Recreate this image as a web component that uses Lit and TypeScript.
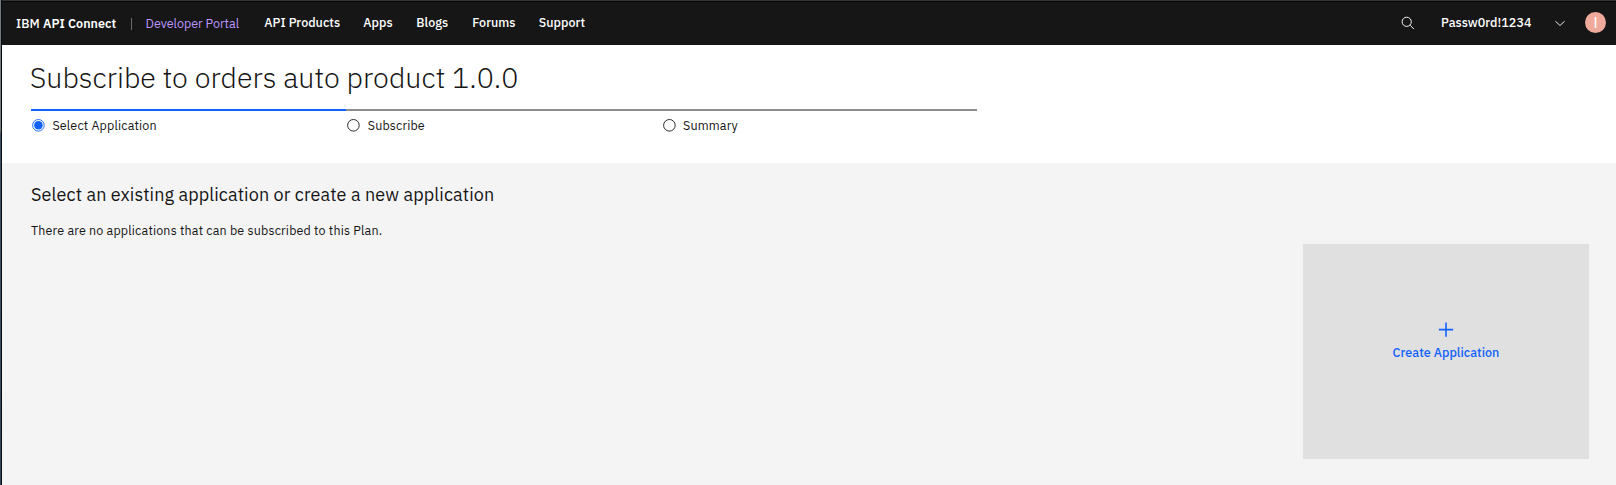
import { LitElement, html, svg, css, nothing } from "lit";
import { customElement } from "lit/decorators.js";

const STEPS = [
  { label: "Select Application", current: true },
  { label: "Subscribe", current: false },
  { label: "Summary", current: false },
];

@customElement("portal-header")
export class PortalHeader extends LitElement {
  static styles = css`
    :host { display: flex; box-sizing: border-box; height: 45px; padding: 14px 10px 0 14px;
      background: #161616; color: #fff; border-top: 1px solid #333635; box-shadow: inset 0 1px #080808;
      font-size: 12.5px; line-height: 16px; white-space: nowrap; }
    .brand { display: flex; width: 248.3px; flex: none; }
    .ibm { font-weight: 500; width: 27px; }
    .product { font-weight: 600; width: 87.5px; letter-spacing: 0.08px; }
    .divider { width: 1px; height: 12px; margin-top: 3px; background: #6f6f6f; }
    .portal { margin-left: 14px; color: #be95ff; }
    nav { display: flex; margin-top: -1px; font-weight: 500; letter-spacing: 0.03px; }
    .api { width: 99px; }
    .apps { width: 53px; }
    .blogs { width: 56px; }
    .forums { width: 66.5px; }
    .tools { display: flex; margin-left: auto; margin-top: -1px; font-weight: 500; }
    .search { width: 14px; height: 14px; margin: 2px 26px 0 0; }
    .user { width: 90px; letter-spacing: 0.03px; }
    .chevron { width: 16px; height: 16px; margin: 1px 17px 0 21px; }
    .avatar { width: 21px; height: 21px; margin-top: -2px; border-radius: 50%; background: #efaa9c;
      display: flex; align-items: center; justify-content: center;
      font-family: Roboto, sans-serif; font-size: 15px; font-weight: 400; }
  `;
  render() {
    return html`
      <div class="brand">
        <span class="ibm">IBM</span><span class="product">API Connect</span>
        <span class="divider"></span><span class="portal">Developer Portal</span>
      </div>
      <nav>
        <span class="api">API Products</span><span class="apps">Apps</span><span class="blogs">Blogs</span>
        <span class="forums">Forums</span><span>Support</span>
      </nav>
      <div class="tools">
        <svg class="search" viewBox="0 0 14 14" fill="none" stroke="#f4f4f4"><circle cx="5.7" cy="5.8" r="4.6"/><path d="M9.1 9.2 13 13.1"/></svg>
        <span class="user">Passw0rd!1234</span>
        <svg class="chevron" viewBox="0 0 16 16" fill="none" stroke="#f4f4f4"><path d="M3.6 6.2 8 10.6l4.4-4.4"/></svg>
        <span class="avatar">I</span>
      </div>`;
  }
}

@customElement("step-progress")
export class StepProgress extends LitElement {
  static styles = css`
    :host { display: flex; width: 946px; font-size: 12.5px; line-height: 16px; letter-spacing: 0.15px; }
    .step { flex: 1; display: flex; border-top: 2px solid #8d8d8d; padding: 6px 0 0 1px; }
    .step.current { border-top-color: #0f62fe; }
    svg { width: 13px; height: 13px; margin: 2px 7.4px 0 0; }
  `;
  render() {
    return STEPS.map(
      (s) => html`<div class="step ${s.current ? "current" : ""}">
        <svg viewBox="0 0 13 13" fill="none" stroke=${s.current ? "#0f62fe" : "#161616"}>
          <circle cx="6.4" cy="6.3" r="5.8" stroke-width="0.9"/>
          ${s.current ? svg`<circle cx="6.4" cy="6.3" r="4.3" fill="#0f62fe" stroke="none"/>` : nothing}
        </svg>
        <span>${s.label}</span>
      </div>`
    );
  }
}

@customElement("app-root")
export class AppRoot extends LitElement {
  static styles = css`
    :host { display: flex; width: 1616px; height: 485px; box-sizing: border-box; overflow: hidden;
      font-family: "IBM Plex Sans", Roboto, sans-serif; color: #161616; background: #f4f4f4; }
    .edge { width: 1px; flex: none; background: linear-gradient(#777b7a 0 130px, #3d5060 135px 300px, #34475a); border-right: 1px solid #050b10; }
    .page { flex: 1; }
    .top { height: 118px; box-sizing: border-box; padding: 14px 29px 0; background: #fff; }
    h1 { margin: 0 0 13px -1px; font-size: 28.6px; line-height: 37px; font-weight: 300; letter-spacing: 0.02px; }
    .content { padding: 20px 27px 0 29px; display: flex; flex-direction: column; }
    h2 { margin: 0 0 16px; font-size: 18px; line-height: 23px; font-weight: 400; letter-spacing: 0.1px; }
    p { margin: 0; font-size: 12.5px; line-height: 16px; letter-spacing: 0.16px; }
    .card { align-self: flex-end; width: 286px; height: 215px; margin-top: 6px; background: #e0e0e0; box-sizing: border-box;
      padding-top: 78px; display: flex; flex-direction: column; align-items: center; color: #0f62fe;
      font-size: 12.5px; line-height: 16px; font-weight: 500; letter-spacing: 0.04px; }
    .plus { width: 16px; height: 16px; margin-bottom: 6px; }
  `;
  render() {
    return html`
      <div class="edge"></div>
      <div class="page">
        <portal-header></portal-header>
        <div class="top">
          <h1>Subscribe to orders auto product 1.0.0</h1>
          <step-progress></step-progress>
        </div>
        <div class="content">
          <h2>Select an existing application or create a new application</h2>
          <p>There are no applications that can be subscribed to this Plan.</p>
          <div class="card">
            <svg class="plus" viewBox="0 0 16 16" fill="none" stroke="#0f62fe" stroke-width="1.6"><path d="M8 .4v14.4M.9 7.6h14.2"/></svg>
            <span>Create Application</span>
          </div>
        </div>
      </div>`;
  }
}
